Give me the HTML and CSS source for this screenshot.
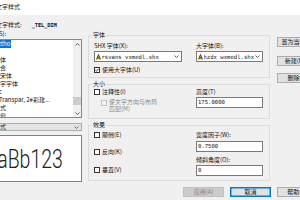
FILE: index.html
```html
<!DOCTYPE html>
<html lang="zh">
<head>
<meta charset="utf-8">
<title>文字样式</title>
<link rel="stylesheet" href="styles.css">
</head>
<body>
<div class="dialog">
  <div class="titlebar"><span class="title-text">文字样式</span></div>
  <div class="current">当前文字样式:<span class="cur-val">_TEL_DIM</span></div>
  <div class="main">
    <div class="left">
      <div class="lbl-s">样式(S):</div>
      <div class="list">
        <div class="items">
          <div class="item sel-row"><span class="sel">ztho</span></div>
          <div class="item"></div>
          <div class="item i-cut">宋体</div>
          <div class="item i-cut">综合</div>
          <div class="item i-cut">仿宋体</div>
          <div class="item i-cut">大字字体</div>
          <div class="item i-cut2">Arc</div>
          <div class="item i-cut3">Transpar, 2#彩建...</div>
          <div class="item i-cut">样式</div>
          <div class="item i-cut">门窗</div>
        </div>
        <div class="scrollbar">
          <div class="sb-arrow"><svg width="5" height="3" viewBox="0 0 5 3"><polyline points="0.5,2.5 2.5,0.5 4.5,2.5" fill="none" stroke="#606060" stroke-width="1"/></svg></div>
          <div class="sb-track"><div class="sb-thumb"></div></div>
          <div class="sb-arrow"><svg width="5" height="3" viewBox="0 0 5 3"><polyline points="0.5,0.5 2.5,2.5 4.5,0.5" fill="none" stroke="#606060" stroke-width="1"/></svg></div>
        </div>
      </div>
      <div class="drop"><span class="drop-text">所有样式</span><svg class="chev" width="5" height="3" viewBox="0 0 5 3"><polyline points="0.5,0.5 2.5,2.5 4.5,0.5" fill="none" stroke="#606060" stroke-width="1"/></svg></div>
      <div class="preview"><span class="preview-text">AaBb123</span></div>
    </div>

    <div class="middle">
      <div class="group g-font">
        <div class="legend">字体</div>
        <div class="cols c-font">
          <div class="col">
            <div class="lbl">SHX 字体(X):</div>
            <div class="combo">
              <svg class="fico" width="5" height="6" viewBox="0 0 5 6"><polygon points="0.5,5.5 2.5,0.5 4.5,5.5" fill="#f2b230"/><polyline points="0.5,5.5 2.5,0.5 4.5,5.5" fill="none" stroke="#222" stroke-width="0.8"/><line x1="1.3" y1="3.8" x2="3.7" y2="3.8" stroke="#222" stroke-width="0.8"/></svg>
              <span class="fname">rsvans_vxmedl.shx</span>
              <svg class="chev" width="5" height="3" viewBox="0 0 5 3"><polyline points="0.5,0.5 2.5,2.5 4.5,0.5" fill="none" stroke="#606060" stroke-width="1"/></svg>
            </div>
            <div class="check c-big"><span class="cb"><svg width="4" height="4" viewBox="0 0 4 4"><polyline points="0.3,2 1.5,3.2 3.7,0.7" fill="none" stroke="#222" stroke-width="0.9"/></svg></span>使用大字体(U)</div>
          </div>
          <div class="col">
            <div class="lbl">大字体(B):</div>
            <div class="combo">
              <svg class="fico" width="5" height="6" viewBox="0 0 5 6"><polygon points="0.5,5.5 2.5,0.5 4.5,5.5" fill="#f2b230"/><polyline points="0.5,5.5 2.5,0.5 4.5,5.5" fill="none" stroke="#222" stroke-width="0.8"/><line x1="1.3" y1="3.8" x2="3.7" y2="3.8" stroke="#222" stroke-width="0.8"/></svg>
              <span class="fname">hzdx_wxmedl.shx</span>
              <svg class="chev" width="5" height="3" viewBox="0 0 5 3"><polyline points="0.5,0.5 2.5,2.5 4.5,0.5" fill="none" stroke="#606060" stroke-width="1"/></svg>
            </div>
          </div>
        </div>
      </div>

      <div class="group g-size">
        <div class="legend">大小</div>
        <div class="cols">
          <div class="col">
            <div class="check"><span class="cb"></span>注释性(I)</div>
            <div class="check disabled"><span class="cb"></span><span class="two">使文字方向与布局<br>匹配(M)</span></div>
          </div>
          <div class="col">
            <div class="lbl">高度(T)</div>
            <div class="tb">175.0000</div>
          </div>
        </div>
      </div>

      <div class="group g-fx">
        <div class="legend">效果</div>
        <div class="cols">
          <div class="col">
            <div class="check fx1"><span class="cb"></span>颠倒(E)</div>
            <div class="check fx2"><span class="cb"></span>反向(K)</div>
            <div class="check fx3"><span class="cb"></span>垂直(V)</div>
          </div>
          <div class="col">
            <div class="lbl l-w">宽度因子(W):</div>
            <div class="tb t-w">0.7500</div>
            <div class="lbl l-o">倾斜角度(O):</div>
            <div class="tb t-o">0</div>
          </div>
        </div>
      </div>
    </div>

    <div class="right">
      <div class="btn b1">置为当前(C)</div>
      <div class="btn b2">新建(N)...</div>
      <div class="btn b3">删除(D)</div>
    </div>
  </div>
  <div class="footer">
    <div class="btn off">应用(A)</div>
    <div class="btn focus">取消</div>
    <div class="btn">帮助(H)</div>
  </div>
</div>
</body>
</html>
```
FILE: styles.css
```css
* { box-sizing: border-box; }
html, body { margin: 0; padding: 0; }
body {
  width: 300px;
  height: 200px;
  overflow: hidden;
  background: #f0f0f0;
  font-family: "Noto Sans CJK SC", "Noto Sans", sans-serif;
  font-size: 6px;
  color: #111;
}
.dialog { width: 318px; }

.titlebar {
  height: 15px;
  background: #fff;
  line-height: 14px;
  white-space: nowrap;
  overflow: hidden;
  text-indent: -4px;
}

.current {
  margin-top: 6px;
  height: 8px;
  line-height: 8px;
  white-space: nowrap;
  text-indent: -16px;
}
.cur-val {
  margin-left: 10px;
  font-family: "DejaVu Sans Mono", monospace;
  font-size: 5.5px;
  font-weight: bold;
  letter-spacing: -0.2px;
}

.main { display: flex; height: 153px; }
.left { width: 82px; margin-right: 6px; flex: none; }
.middle { width: 182px; margin-right: 7px; flex: none; }
.right { width: 41px; flex: none; }

.lbl-s {
  margin-top: 1px;
  height: 8px;
  line-height: 8px;
  white-space: nowrap;
  text-indent: -15px;
}

.list {
  margin-top: 1px;
  height: 79px;
  background: #fff;
  border: 1px solid #828790;
  border-left: none;
  display: flex;
}
.items { flex: 1; overflow: hidden; }
.item {
  height: 8px;
  line-height: 8px;
  white-space: nowrap;
  overflow: hidden;
}
.sel { background: #0078d7; color: #fff; padding-right: 1px; margin-left: -2px; }
.i-cut { text-indent: -6px; }
.i-cut2 { text-indent: -7px; }
.i-cut3 { text-indent: -1px; }

.scrollbar {
  width: 8px;
  background: #f0f0f0;
  display: flex;
  flex-direction: column;
}
.sb-arrow { height: 8px; display: flex; align-items: center; justify-content: center; }
.sb-track { flex: 1; }
.sb-thumb { margin-top: 49px; height: 8px; background: #cdcdcd; }

.drop {
  margin-top: 5px;
  height: 8px;
  background: #e5e5e5;
  border: 1px solid #acacac;
  border-left: none;
  display: flex;
  align-items: center;
  justify-content: space-between;
  padding-right: 2px;
  line-height: 6px;
  white-space: nowrap;
  overflow: hidden;
}
.drop-text { margin-left: -18px; }

.preview {
  margin-top: 4px;
  height: 47px;
  background: #fff;
  border: 1px solid #828282;
  border-left: none;
  display: flex;
  align-items: center;
  overflow: hidden;
}
.preview-text {
  display: inline-block;
  margin-left: -15px;
  font-family: Roboto, "Liberation Sans", sans-serif;
  font-weight: 300;
  font-size: 26px;
  line-height: 26px;
  color: #222;
  transform: scaleX(0.75);
  transform-origin: 0 50%;
  white-space: nowrap;
}

.group {
  border: 1px solid #dcdcdc;
  padding: 0 6px 0 5px;
}
.legend {
  width: max-content;
  height: 8px;
  line-height: 8px;
  margin-top: -5px;
  margin-left: -2px;
  padding: 0 1px;
  background: #f0f0f0;
}
.cols {
  display: grid;
  grid-template-columns: 88px 67px;
  column-gap: 14px;
}
.lbl { height: 8px; line-height: 8px; white-space: nowrap; }

.g-font { margin-top: 6px; padding-bottom: 3px; }
.c-font { margin-top: 3px; }
.combo {
  margin-top: 1px;
  height: 11px;
  background: #fff;
  border: 1px solid #7a7a7a;
  display: flex;
  align-items: center;
  padding: 0 2px 0 1px;
  white-space: nowrap;
  overflow: hidden;
}
.fico { flex: none; margin-right: 0.5px; }
.fname {
  font-family: "DejaVu Sans Mono", monospace;
  font-size: 5.6px;
  flex: 1;
  overflow: hidden;
}
.chev { flex: none; }

.check {
  display: flex;
  align-items: center;
  height: 8px;
  line-height: 8px;
  white-space: nowrap;
}
.cb {
  width: 6px;
  height: 6px;
  border: 1px solid #333;
  background: #fff;
  margin-right: 2px;
  flex: none;
  display: flex;
  align-items: center;
  justify-content: center;
}
.c-big { margin-top: 4px; }

.g-size { margin-top: 6px; padding-bottom: 6px; }
.disabled { margin-top: 3px; margin-left: 7px; height: 13px; align-items: flex-start; color: #8a8a8a; }
.disabled .cb { border-color: #c2c2c2; background: #f4f4f4; margin-top: 0.5px; }
.two { line-height: 6.5px; }

.tb {
  margin-top: 1px;
  height: 11px;
  background: #fff;
  border: 1px solid #7a7a7a;
  padding-left: 1px;
  line-height: 9px;
  font-family: "DejaVu Sans Mono", monospace;
  font-size: 5.6px;
}

.g-fx { margin-top: 6px; padding-bottom: 4px; }
.g-fx .cols { margin-top: 2px; }
.fx2 { margin-top: 9px; }
.fx3 { margin-top: 10px; }
.t-w { margin-top: 2px; }
.l-o { margin-top: 4px; }
.t-o { margin-top: 1px; }

.btn {
  width: 41px;
  height: 10px;
  border: 1px solid #adadad;
  background: #e1e1e1;
  line-height: 8px;
  text-align: center;
  white-space: nowrap;
  overflow: hidden;
}
.b1 { margin-top: 8px; }
.b2 { margin-top: 9px; }
.b3 { margin-top: 7px; }

.footer {
  margin-top: 5px;
  display: flex;
  justify-content: flex-end;
  gap: 6px;
}
.off { background: #cccccc; border-color: #bfbfbf; color: #838383; }
.focus { border-color: #0078d7; box-shadow: inset 0 0 0 0.5px #0078d7; }
```
